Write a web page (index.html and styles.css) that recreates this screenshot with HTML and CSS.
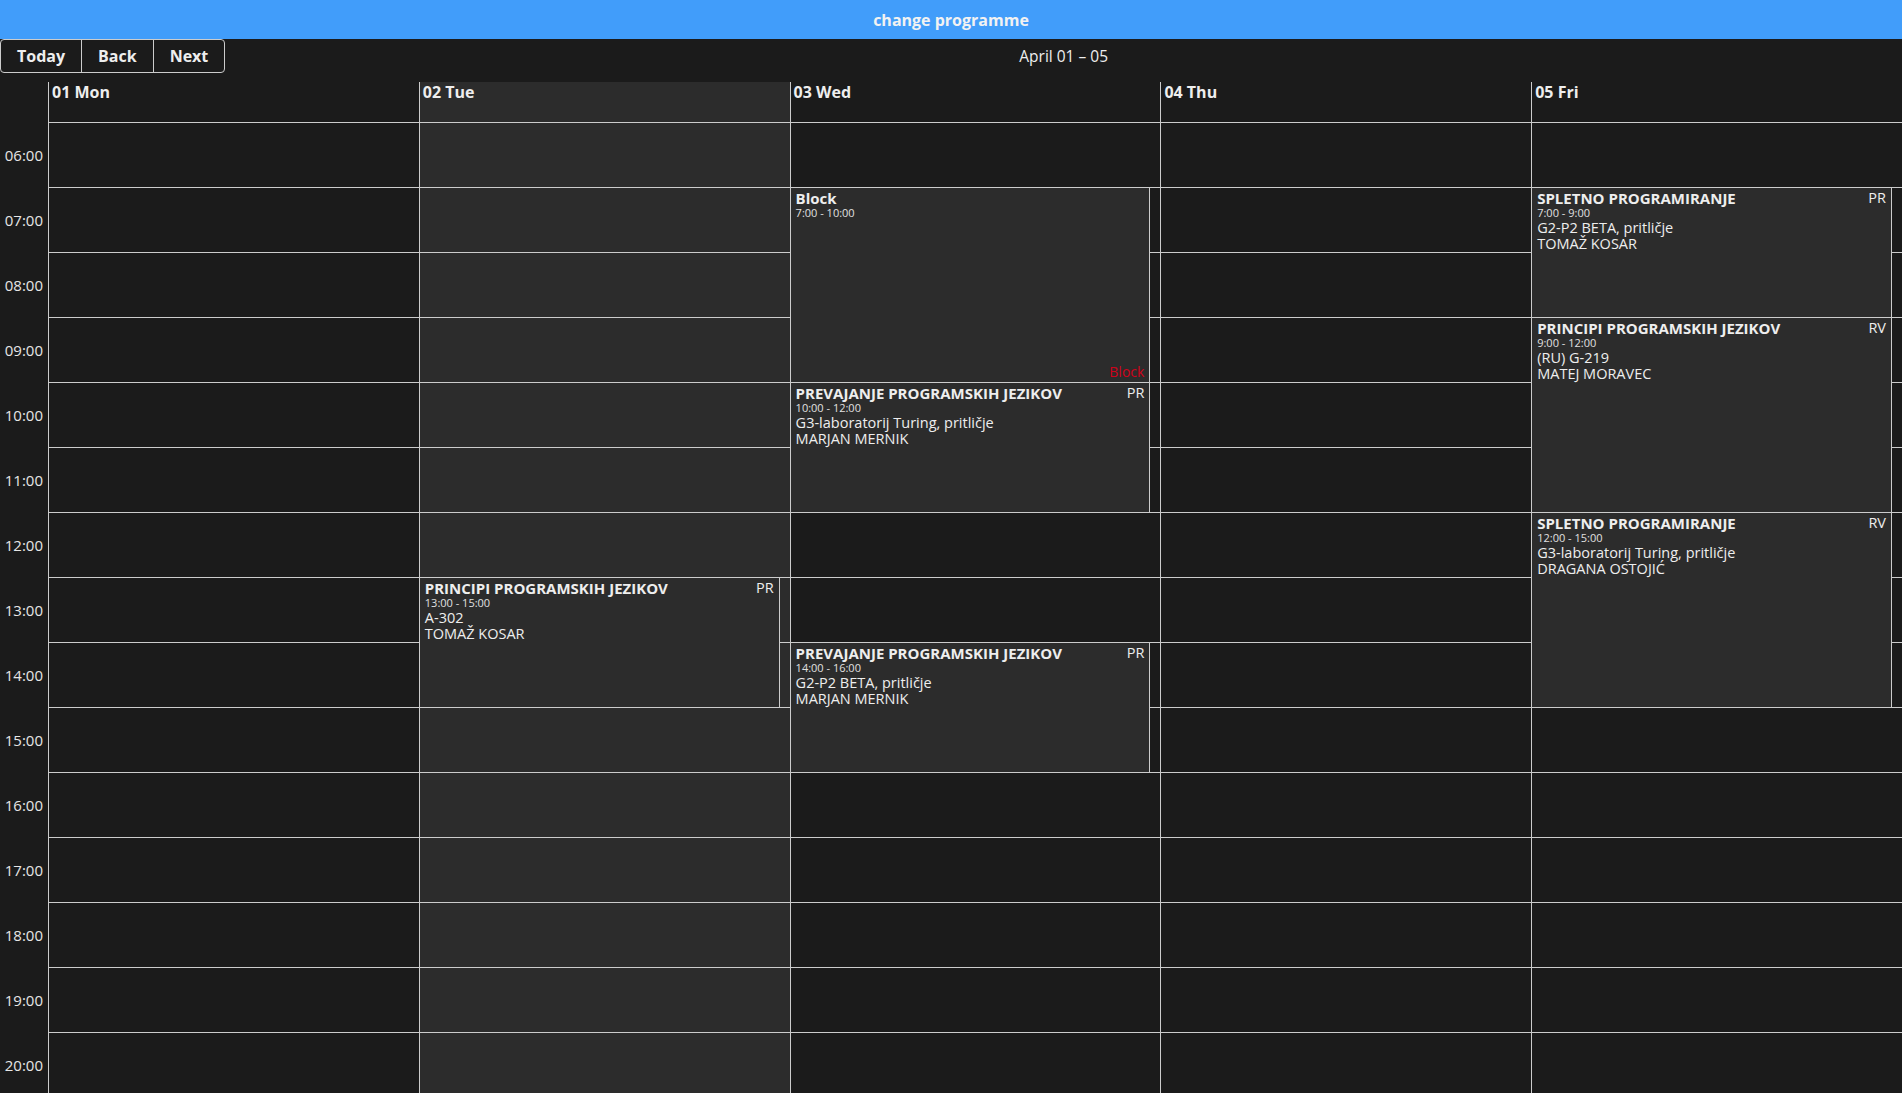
FILE: index.html
```html
<!DOCTYPE html>
<html lang="sl">
<head>
    <meta charset="UTF-8">
    <title>Urnik</title>
    <link rel="stylesheet" href="styles.css">
</head>
<body>

<div class="app-bar">change programme</div>

<div class="calendar">
    <div class="toolbar">
        <span class="btn-group">
            <button type="button">Today</button>
            <button type="button">Back</button>
            <button type="button">Next</button>
        </span>
        <span class="toolbar-label">April 01 – 05</span>
    </div>

    <div class="time-header">
        <div class="gutter-head"></div>
        <div class="day-head">01 Mon</div>
        <div class="day-head today">02 Tue</div>
        <div class="day-head">03 Wed</div>
        <div class="day-head">04 Thu</div>
        <div class="day-head">05 Fri</div>
    </div>

    <div class="time-content">
        <div class="gutter">
            <div class="time-label">06:00</div>
            <div class="time-label">07:00</div>
            <div class="time-label">08:00</div>
            <div class="time-label">09:00</div>
            <div class="time-label">10:00</div>
            <div class="time-label">11:00</div>
            <div class="time-label">12:00</div>
            <div class="time-label">13:00</div>
            <div class="time-label">14:00</div>
            <div class="time-label">15:00</div>
            <div class="time-label">16:00</div>
            <div class="time-label">17:00</div>
            <div class="time-label">18:00</div>
            <div class="time-label">19:00</div>
            <div class="time-label">20:00</div>
        </div>

        <!-- Monday -->
        <div class="day-col">
            <div class="slot"></div><div class="slot"></div><div class="slot"></div><div class="slot"></div>
            <div class="slot"></div><div class="slot"></div><div class="slot"></div><div class="slot"></div>
            <div class="slot"></div><div class="slot"></div><div class="slot"></div><div class="slot"></div>
            <div class="slot"></div><div class="slot"></div><div class="slot"></div>
        </div>

        <!-- Tuesday (today) -->
        <div class="day-col today">
            <div class="slot"></div><div class="slot"></div><div class="slot"></div><div class="slot"></div>
            <div class="slot"></div><div class="slot"></div><div class="slot"></div><div class="slot"></div>
            <div class="slot"></div><div class="slot"></div><div class="slot"></div><div class="slot"></div>
            <div class="slot"></div><div class="slot"></div><div class="slot"></div>

            <div class="event" style="top:454px; height:131px;">
                <div class="event-head"><span class="event-title">PRINCIPI PROGRAMSKIH JEZIKOV</span><span class="event-tag">PR</span></div>
                <div class="event-time">13:00 - 15:00</div>
                <div class="event-line">A-302</div>
                <div class="event-line">TOMAŽ KOSAR</div>
            </div>
        </div>

        <!-- Wednesday -->
        <div class="day-col">
            <div class="slot"></div><div class="slot"></div><div class="slot"></div><div class="slot"></div>
            <div class="slot"></div><div class="slot"></div><div class="slot"></div><div class="slot"></div>
            <div class="slot"></div><div class="slot"></div><div class="slot"></div><div class="slot"></div>
            <div class="slot"></div><div class="slot"></div><div class="slot"></div>

            <div class="event" style="top:64px; height:196px;">
                <div class="event-head"><span class="event-title">Block</span></div>
                <div class="event-time">7:00 - 10:00</div>
                <div class="event-note">Block</div>
            </div>
            <div class="event" style="top:259px; height:131px;">
                <div class="event-head"><span class="event-title">PREVAJANJE PROGRAMSKIH JEZIKOV</span><span class="event-tag">PR</span></div>
                <div class="event-time">10:00 - 12:00</div>
                <div class="event-line">G3-laboratorij Turing, pritličje</div>
                <div class="event-line">MARJAN MERNIK</div>
            </div>
            <div class="event" style="top:519px; height:131px;">
                <div class="event-head"><span class="event-title">PREVAJANJE PROGRAMSKIH JEZIKOV</span><span class="event-tag">PR</span></div>
                <div class="event-time">14:00 - 16:00</div>
                <div class="event-line">G2-P2 BETA, pritličje</div>
                <div class="event-line">MARJAN MERNIK</div>
            </div>
        </div>

        <!-- Thursday -->
        <div class="day-col">
            <div class="slot"></div><div class="slot"></div><div class="slot"></div><div class="slot"></div>
            <div class="slot"></div><div class="slot"></div><div class="slot"></div><div class="slot"></div>
            <div class="slot"></div><div class="slot"></div><div class="slot"></div><div class="slot"></div>
            <div class="slot"></div><div class="slot"></div><div class="slot"></div>
        </div>

        <!-- Friday -->
        <div class="day-col">
            <div class="slot"></div><div class="slot"></div><div class="slot"></div><div class="slot"></div>
            <div class="slot"></div><div class="slot"></div><div class="slot"></div><div class="slot"></div>
            <div class="slot"></div><div class="slot"></div><div class="slot"></div><div class="slot"></div>
            <div class="slot"></div><div class="slot"></div><div class="slot"></div>

            <div class="event" style="top:64px; height:131px;">
                <div class="event-head"><span class="event-title">SPLETNO PROGRAMIRANJE</span><span class="event-tag">PR</span></div>
                <div class="event-time">7:00 - 9:00</div>
                <div class="event-line">G2-P2 BETA, pritličje</div>
                <div class="event-line">TOMAŽ KOSAR</div>
            </div>
            <div class="event" style="top:194px; height:196px;">
                <div class="event-head"><span class="event-title">PRINCIPI PROGRAMSKIH JEZIKOV</span><span class="event-tag">RV</span></div>
                <div class="event-time">9:00 - 12:00</div>
                <div class="event-line">(RU) G-219</div>
                <div class="event-line">MATEJ MORAVEC</div>
            </div>
            <div class="event" style="top:389px; height:196px;">
                <div class="event-head"><span class="event-title">SPLETNO PROGRAMIRANJE</span><span class="event-tag">RV</span></div>
                <div class="event-time">12:00 - 15:00</div>
                <div class="event-line">G3-laboratorij Turing, pritličje</div>
                <div class="event-line">DRAGANA OSTOJIĆ</div>
            </div>
        </div>
    </div>
</div>

</body>
</html>
```

FILE: styles.css
```css
* {
    box-sizing: border-box;
}

html, body {
    margin: 0;
    height: 100%;
    overflow: hidden;
}

body {
    background: #1b1b1b;
    color: #eeeeee;
    font-family: "Open Sans", "Noto Sans", sans-serif;
}

.app-bar {
    height: 39px;
    background: #419dfa;
    color: #f2f2f2;
    font-size: 16px;
    font-weight: 700;
    display: flex;
    align-items: center;
    justify-content: center;
}

/* toolbar */

.toolbar {
    display: flex;
    align-items: center;
    margin-bottom: 9px;
}

.btn-group {
    display: flex;
}

.btn-group button {
    font-family: inherit;
    font-size: 16px;
    font-weight: 700;
    line-height: 21px;
    padding: 6px 16px 5px;
    margin: 0;
    color: #eeeeee;
    background: transparent;
    border: 1px solid #cccccc;
    border-radius: 0;
    cursor: pointer;
}

.btn-group button + button {
    margin-left: -1px;
}

.btn-group button:first-child {
    border-radius: 4px 0 0 4px;
}

.btn-group button:last-child {
    border-radius: 0 4px 4px 0;
}

.toolbar-label {
    flex: 1;
    text-align: center;
    font-size: 15.5px;
}

/* week grid */

.time-header, .time-content {
    display: grid;
    grid-template-columns: 48px repeat(5, 1fr);
}

.day-head {
    height: 41px;
    padding: 1px 3px 0;
    border-left: 1px solid #cccccc;
    border-bottom: 1px solid #cccccc;
    font-size: 16px;
    font-weight: 700;
    line-height: 18px;
}

.today {
    background: #2c2c2c;
}

.time-label {
    height: 65px;
    display: flex;
    align-items: center;
    justify-content: flex-end;
    padding: 0 5px 1px 0;
    font-size: 15px;
    color: #e6e6e6;
}

.day-col {
    position: relative;
    border-left: 1px solid #cccccc;
}

.slot {
    height: 65px;
    border-bottom: 1px solid #cccccc;
}

/* events */

.event {
    position: absolute;
    left: -1px;
    right: 10px;
    display: flex;
    flex-direction: column;
    padding: 2px 5px;
    background: #2c2c2c;
    border: 1px solid #cccccc;
    overflow: hidden;
}

.event-head {
    display: flex;
    justify-content: space-between;
    line-height: 16px;
}

.event-title {
    font-size: 15px;
    font-weight: 700;
}

.event-tag {
    font-size: 14.5px;
}

.event-time {
    font-size: 11px;
    line-height: 14px;
    color: #e0e0e0;
}

.event-line {
    font-size: 14.5px;
    line-height: 16px;
}

.event-note {
    margin-top: auto;
    text-align: right;
    font-size: 14px;
    line-height: 16px;
    color: #d0021b;
}
```
